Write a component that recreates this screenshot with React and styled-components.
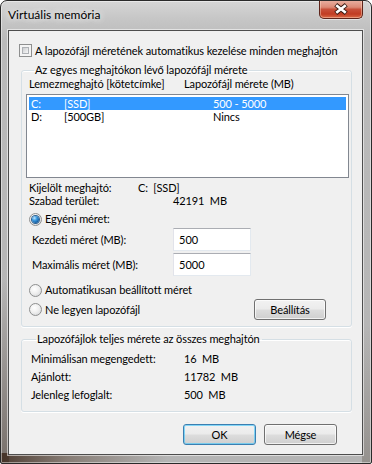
import styled, { createGlobalStyle } from 'styled-components';

const FONT = `Lato, "Liberation Sans", sans-serif`;

const GlobalStyle = createGlobalStyle`
  html, body {
    margin: 0;
    padding: 0;
    background: #ffffff;
  }
  * {
    box-sizing: border-box;
  }
`;

export default function App() {
  return (
    <>
      <GlobalStyle />
      <Window>
        <TitleBar>
          <TitleText>Virtuális memória</TitleText>
          <CloseButton>
            <svg width="44" height="18" viewBox="0 0 44 18">
              <path d="M16.5 4.5 L27.5 13.5 M27.5 4.5 L16.5 13.5" stroke="#3a1a12" strokeWidth="4.8" fill="none" />
              <path d="M17 5 L27 13 M27 5 L17 13" stroke="#ffffff" strokeWidth="2.8" fill="none" />
            </svg>
          </CloseButton>
        </TitleBar>

        <Client>
          <CheckRow>
            <CheckBox><CheckInner /></CheckBox>
            <span>A lapozófájl méretének automatikus kezelése minden meghajtón</span>
          </CheckRow>

          <Group $top={6} $bottom={6} $left={7}>
            <Legend>Az egyes meghajtókon lévő lapozófájl mérete</Legend>
            <ColumnHeads>
              <span>Lemezmeghajtó [kötetcímke]</span>
              <span>Lapozófájl mérete (MB)</span>
            </ColumnHeads>
            <ListBox>
              <ListRow $selected>
                <span>C:</span>
                <span>[SSD]</span>
                <span>500 - 5000</span>
              </ListRow>
              <ListRow>
                <span>D:</span>
                <span>[500GB]</span>
                <span>Nincs</span>
              </ListRow>
            </ListBox>

            <InfoLine $labelWidth={109} $top={3}>
              <span>Kijelölt meghajtó:</span>
              <span>C:&nbsp;&nbsp;[SSD]</span>
            </InfoLine>
            <InfoLine $labelWidth={144}>
              <span>Szabad terület:</span>
              <span>42191&nbsp;&nbsp;MB</span>
            </InfoLine>

            <RadioRow $top={5}>
              <Radio $checked />
              <span>Egyéni méret:</span>
            </RadioRow>
            <SizeRow $top={2}>
              <SizeLabel>Kezdeti méret (MB):</SizeLabel>
              <TextBox defaultValue="500" />
            </SizeRow>
            <SizeRow $top={2}>
              <SizeLabel>Maximális méret (MB):</SizeLabel>
              <TextBox defaultValue="5000" />
            </SizeRow>
            <RadioRow $top={7}>
              <Radio />
              <span>Automatikusan beállított méret</span>
            </RadioRow>
            <SetRow>
              <RadioRow>
                <Radio />
                <span>Ne legyen lapozófájl</span>
              </RadioRow>
              <Button $width={72}>Beállítás</Button>
            </SetRow>
          </Group>

          <Group $top={5} $bottom={7} $left={9}>
            <Legend>Lapozófájlok teljes mérete az összes meghajtón</Legend>
            <Totals>
              <TotalRow><span>Minimálisan megengedett:</span><span>16&nbsp;&nbsp;MB</span></TotalRow>
              <TotalRow><span>Ajánlott:</span><span>11782&nbsp;&nbsp;MB</span></TotalRow>
              <TotalRow><span>Jelenleg lefoglalt:</span><span>500&nbsp;&nbsp;MB</span></TotalRow>
            </Totals>
          </Group>

          <Footer>
            <Button $width={73} $default>OK</Button>
            <Button $width={73}>Mégse</Button>
          </Footer>
        </Client>
      </Window>
    </>
  );
}

const Window = styled.div`
  width: 372px;
  height: 464px;
  display: flex;
  flex-direction: column;
  border: 1px solid #2a2a2a;
  border-radius: 7px 7px 2px 2px;
  background:
    linear-gradient(100deg, rgba(60, 40, 28, 0.85) 0%, rgba(90, 70, 55, 0.5) 18%, rgba(150, 150, 150, 0) 45%) bottom / 100% 10px no-repeat,
    linear-gradient(to bottom, rgba(0,0,0,0) 60%, rgba(70, 55, 45, 0.55) 100%) left / 8px 100% no-repeat,
    linear-gradient(to bottom, rgba(0,0,0,0) 70%, rgba(90, 80, 70, 0.35) 100%) right / 9px 100% no-repeat,
    linear-gradient(to bottom, #d6d6d6 0px, #c6c6c6 18px, #bababa 40px, #b4b4b4 100%);
  box-shadow: inset 0 0 0 1px rgba(255, 255, 255, 0.45);
  font-family: ${FONT};
  font-size: 11px;
  letter-spacing: -0.1px;
  color: #000;
  overflow: hidden;
`;

const TitleBar = styled.div`
  height: 29px;
  display: flex;
  align-items: flex-start;
  justify-content: space-between;
  padding-left: 7px;
  padding-right: 8px;
`;

const TitleText = styled.div`
  margin-top: 6px;
  font-size: 12px;
  letter-spacing: 0;
  line-height: 16px;
  color: #000;
  text-shadow: 0 0 6px rgba(255, 255, 255, 0.9), 0 0 10px rgba(255, 255, 255, 0.7);
`;

const CloseButton = styled.div`
  width: 44px;
  height: 19px;
  margin-top: -1px;
  display: flex;
  align-items: center;
  justify-content: center;
  border: 1px solid #5e241a;
  border-top: none;
  border-radius: 0 0 5px 5px;
  background: linear-gradient(to bottom, #eab2a4 0%, #dc8a76 40%, #c8503a 52%, #c13c22 78%, #db6a47 100%);
  box-shadow: inset 0 0 0 1px rgba(255, 220, 200, 0.45), 0 1px 0 rgba(255, 255, 255, 0.5);
`;

const Client = styled.div`
  flex: 1;
  margin: 0 8px 8px 7px;
  display: flex;
  flex-direction: column;
  background: #f0f0f0;
  border: 1px solid #4d4d4d;
  box-shadow: 0 0 0 1px rgba(255, 255, 255, 0.55);
`;

const CheckRow = styled.div`
  margin: 13px 0 0 10px;
  height: 13px;
  display: flex;
  align-items: center;
  gap: 3px;
  line-height: 13px;
  white-space: nowrap;
`;

const CheckBox = styled.div`
  width: 13px;
  height: 13px;
  flex: none;
  border: 1px solid #8e8f8f;
  background: #f4f4f4;
  padding: 2px;
`;

const CheckInner = styled.div`
  width: 100%;
  height: 100%;
  border: 1px solid #aeb1b5;
  background: linear-gradient(135deg, #cbcdd0 0%, #e6e7e8 60%, #f6f6f6 100%);
`;

const Group = styled.fieldset`
  margin: ${p => p.$top}px 10px 0 12px;
  padding: 0 2px ${p => p.$bottom}px ${p => p.$left}px;
  border: 1px solid #d5dfe5;
  border-radius: 3px;
  box-shadow: 0 1px 0 #ffffff, inset 0 1px 0 #ffffff;
  min-inline-size: 0;
`;

const Legend = styled.legend`
  margin-left: 5px;
  padding: 0 2px 0 1px;
  line-height: 14px;
  white-space: nowrap;
`;

const ColumnHeads = styled.div`
  display: grid;
  grid-template-columns: 155px 1fr;
  line-height: 14px;
  height: 14px;
  white-space: nowrap;
`;

const ListBox = styled.div`
  margin: 3px 0 0 -3px;
  height: 84px;
  background: #ffffff;
  border: 1px solid #828790;
  padding: 2px 2px 0 2px;
`;

const ListRow = styled.div`
  display: grid;
  grid-template-columns: 33px 149px 1fr;
  height: 13px;
  line-height: 13px;
  padding-left: 2px;
  background: ${p => (p.$selected ? '#3399ff' : 'transparent')};
  color: ${p => (p.$selected ? '#ffffff' : '#000000')};
`;

const InfoLine = styled.div`
  margin-top: ${p => p.$top || 0}px;
  display: grid;
  grid-template-columns: ${p => p.$labelWidth}px 1fr;
  line-height: 13px;
  white-space: nowrap;
`;

const RadioRow = styled.div`
  margin-top: ${p => p.$top || 0}px;
  display: flex;
  align-items: center;
  gap: 3px;
  line-height: 14px;
  height: 14px;
  white-space: nowrap;
`;

const Radio = styled.span`
  width: 13px;
  height: 13px;
  flex: none;
  border-radius: 50%;
  border: 1px solid #8e8f8f;
  background: radial-gradient(circle at 40% 35%, #ffffff 0%, #f0f0f0 45%, #cfd1d4 100%);
  display: flex;
  align-items: center;
  justify-content: center;
  &::after {
    content: '';
    display: ${p => (p.$checked ? 'block' : 'none')};
    width: 7px;
    height: 7px;
    border-radius: 50%;
    background: radial-gradient(circle at 35% 30%, #bfe6ff 0%, #3c9ae0 35%, #105a9e 75%, #0b3f77 100%);
    box-shadow: 0 0 0 1px #2b5f8f;
  }
`;

const SizeRow = styled.div`
  margin-top: ${p => p.$top || 0}px;
  display: flex;
  align-items: center;
  height: 23px;
  padding-left: 3px;
`;

const SizeLabel = styled.span`
  width: 141px;
  flex: none;
`;

const TextBox = styled.input`
  width: 78px;
  height: 23px;
  padding: 0 0 0 5px;
  font-family: ${FONT};
  font-size: 11px;
  color: #000;
  background: #ffffff;
  border: 1px solid #dbdfe6;
  border-top-color: #abadb3;
  border-left-color: #e2e3ea;
  border-right-color: #e3e9ef;
  border-bottom-color: #e3e9ef;
  outline: none;
`;

const SetRow = styled.div`
  margin-top: 2px;
  height: 21px;
  display: flex;
  align-items: center;
  justify-content: space-between;
  padding-right: 23px;
`;

const Button = styled.div`
  width: ${p => p.$width}px;
  height: 21px;
  display: flex;
  align-items: center;
  justify-content: center;
  line-height: 14px;
  border: 1px solid ${p => (p.$default ? '#3c7fb1' : '#707070')};
  border-radius: 3px;
  background: linear-gradient(to bottom, #f2f2f2 0%, #ebebeb 48%, #dddddd 52%, #cfcfcf 100%);
  box-shadow: inset 0 0 0 1px ${p => (p.$default ? 'rgba(72, 200, 250, 0.65)' : 'rgba(255, 255, 255, 0.7)')};
`;

const Totals = styled.div`
  padding-top: 4px;
  display: flex;
  flex-direction: column;
`;

const TotalRow = styled.div`
  display: grid;
  grid-template-columns: 153px 1fr;
  height: 18px;
  line-height: 18px;
  white-space: nowrap;
`;

const Footer = styled.div`
  margin-top: 12px;
  display: flex;
  justify-content: flex-end;
  gap: 8px;
  padding-right: 25px;
`;
